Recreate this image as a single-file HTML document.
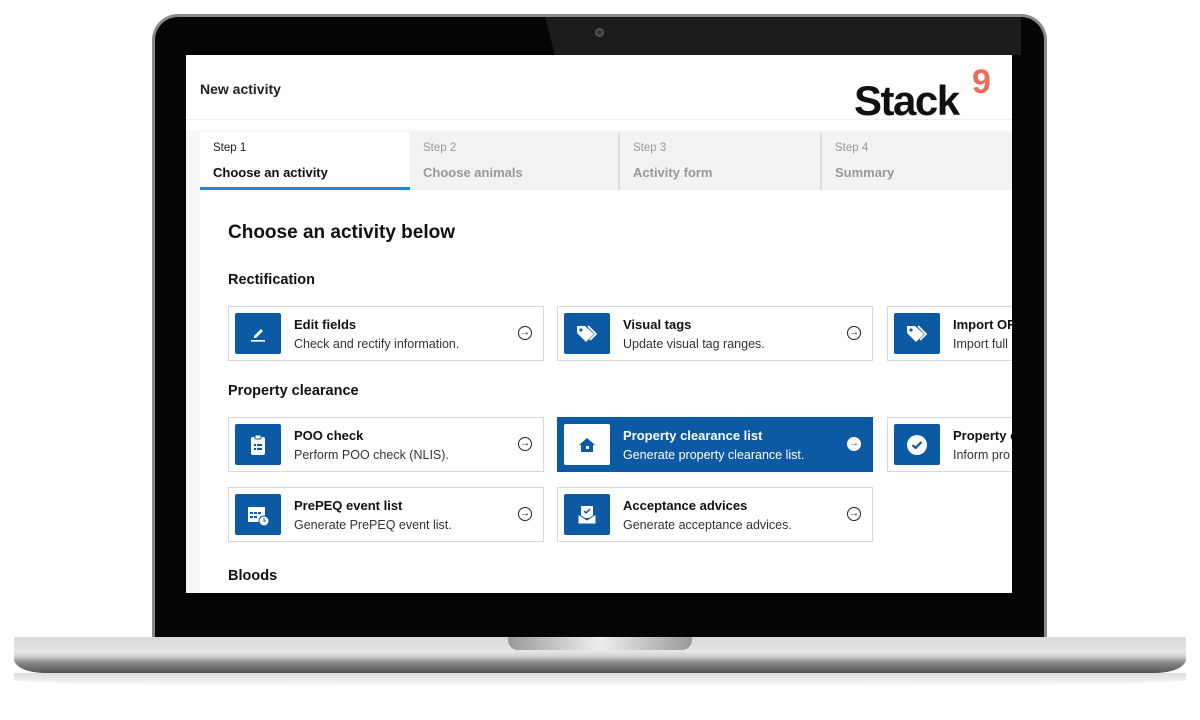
<!DOCTYPE html>
<html><head><meta charset="utf-8"><style>
*{margin:0;padding:0;box-sizing:border-box}
body{width:1200px;height:720px;background:#fff;position:relative;overflow:hidden;font-family:"Liberation Sans",Arial,sans-serif;color:#111}
.abs{position:absolute}
#bezel{left:152px;top:14px;width:895px;height:630px;background:#050505;border-radius:26px 26px 0 0;border:3px solid #8a8a8a;border-bottom:none}
#glare{left:545px;top:17px;width:476px;height:38px;background:#1c1c1e;clip-path:polygon(0 0,100% 0,100% 100%,10px 100%)}
#screen{left:186px;top:55px;width:826px;height:538px;background:#fff;overflow:hidden}
#base{left:14px;top:637px;width:1172px;height:36px;border-radius:0 0 30px 30px/0 0 14px 14px;background:linear-gradient(#d8d8d8 0,#e6e6e6 40%,#cfcfcf 55%,#8a8a8a 70%,#555 100%)}
#notch{left:508px;top:637px;width:184px;height:13px;border-radius:0 0 10px 10px;background:linear-gradient(90deg,#999,#eee 50%,#999)}
#shadow{left:14px;top:673px;width:1172px;height:14px;background:linear-gradient(#ddd,#fff);border-radius:0 0 50% 50%}
.card{position:absolute;width:316px;height:55px;border:1px solid #d8d8d8;background:#fff}
.card .ic{position:absolute;left:6px;top:6px;width:46px;height:41px;background:#0b5aa3;border-radius:2px;display:flex;align-items:center;justify-content:center}
.card .t{position:absolute;left:65px;top:10px;font-size:13px;font-weight:bold}
.card .d{position:absolute;left:65px;top:30px;font-size:12.5px;color:#333}
.card .ar{position:absolute;right:11px;top:19px;width:14px;height:14px;border:1.3px solid #222;border-radius:50%;font-size:10px;line-height:11px;text-align:center;font-weight:bold}
.card.sel{background:#0b5aa3;border-color:#0b5aa3}
.card.sel .t,.card.sel .d{color:#fff}
.card.sel .ic{background:#fff}
.card.sel .ar{background:#fff;color:#0b5aa3;border-color:#fff}
.step{position:absolute;top:77px;height:58px;background:#f2f2f2;border-right:2px solid #ddd}
.step .s{position:absolute;left:13px;top:10px;font-size:11.5px;color:#999}
.step .n{position:absolute;left:13px;top:33px;font-size:13px;color:#999;font-weight:bold}
h3{position:absolute;font-size:14.5px;font-weight:bold;left:42px}
</style></head><body>
<div class="abs" id="bezel"></div>
<div class="abs" id="glare"></div>
<div class="abs" style="left:595px;top:28px;width:9px;height:9px;border-radius:50%;background:#333;border:2px solid #555"></div>
<div class="abs" id="screen">
  <div class="abs" style="left:14px;top:26px;font-size:14px;font-weight:bold;color:#222">New activity</div>
  <div class="abs" style="left:0;top:64px;width:826px;height:1px;background:#eee"></div>
  <div class="abs" style="left:668px;top:22px;font-size:42px;font-weight:bold;letter-spacing:-1.5px;color:#111">Stack</div>
  <div class="abs" style="left:786px;top:10px;font-size:34px;font-weight:bold;color:#f06a5a;line-height:34px">9</div>
  <div class="abs" style="left:0;top:75px;width:826px;height:463px;background:#f7f7f7"></div>
  <div class="abs" style="left:14px;top:135px;width:812px;height:410px;background:#fff"></div>
  <div class="step" style="left:14px;width:210px;background:#fff;border-right:none"><div class="s" style="color:#222">Step 1</div><div class="n" style="color:#111">Choose an activity</div><div class="abs" style="left:0;bottom:0;width:210px;height:3px;background:#1e88e5"></div></div>
  <div class="step" style="left:224px;width:210px"><div class="s">Step 2</div><div class="n">Choose animals</div></div>
  <div class="step" style="left:434px;width:202px"><div class="s">Step 3</div><div class="n">Activity form</div></div>
  <div class="step" style="left:636px;width:200px"><div class="s">Step 4</div><div class="n">Summary</div></div>
  <div class="abs" style="left:42px;top:167px;font-size:19px;font-weight:bold">Choose an activity below</div>
  <h3 style="top:217px">Rectification</h3>
  <h3 style="top:328px">Property clearance</h3>
  <h3 style="top:513px">Bloods</h3>

  <div class="card" style="left:42px;top:251px"><div class="ic"><svg width="20" height="20" viewBox="0 0 20 20"><path d="M6 12l7-7 2 2-7 7H6z" fill="#fff"/><rect x="3" y="16" width="14" height="1.6" fill="#fff"/></svg></div><div class="t">Edit fields</div><div class="d">Check and rectify information.</div><div class="ar">→</div></div>
  <div class="card" style="left:371px;top:251px"><div class="ic"><svg width="24" height="22" viewBox="0 0 24 22"><path d="M2 3v7l9 9 8-8-9-8z" fill="#fff"/><circle cx="6" cy="7" r="1.6" fill="#0b5aa3"/><path d="M13 3l8 8-6 6" stroke="#fff" stroke-width="1.8" fill="none"/></svg></div><div class="t">Visual tags</div><div class="d">Update visual tag ranges.</div><div class="ar">→</div></div>
  <div class="card" style="left:701px;top:251px"><div class="ic"><svg width="24" height="22" viewBox="0 0 24 22"><path d="M2 3v7l9 9 8-8-9-8z" fill="#fff"/><circle cx="6" cy="7" r="1.6" fill="#0b5aa3"/><path d="M13 3l8 8-6 6" stroke="#fff" stroke-width="1.8" fill="none"/></svg></div><div class="t">Import OR</div><div class="d">Import full</div></div>

  <div class="card" style="left:42px;top:362px"><div class="ic"><svg width="18" height="22" viewBox="0 0 18 22"><rect x="2" y="3" width="14" height="18" rx="2" fill="#fff"/><rect x="6" y="1" width="6" height="4" rx="1" fill="#fff" stroke="#0b5aa3"/><g fill="#0b5aa3"><rect x="5" y="10" width="2" height="2"/><rect x="8" y="10" width="5" height="2"/><rect x="5" y="14" width="2" height="2"/><rect x="8" y="14" width="5" height="2"/></g></svg></div><div class="t">POO check</div><div class="d">Perform POO check (NLIS).</div><div class="ar">→</div></div>
  <div class="card sel" style="left:371px;top:362px"><div class="ic"><svg width="20" height="18" viewBox="0 0 20 18"><path d="M10 2l8 7h-2v7H4V9H2z" fill="#0b5aa3"/><rect x="9" y="10" width="3" height="3" fill="#fff"/></svg></div><div class="t">Property clearance list</div><div class="d">Generate property clearance list.</div><div class="ar">→</div></div>
  <div class="card" style="left:701px;top:362px"><div class="ic"><svg width="22" height="22" viewBox="0 0 22 22"><circle cx="11" cy="11" r="10" fill="#fff"/><path d="M6.5 11l3 3 6-6" stroke="#0b5aa3" stroke-width="2.2" fill="none"/></svg></div><div class="t">Property c</div><div class="d">Inform pro</div></div>

  <div class="card" style="left:42px;top:432px"><div class="ic"><svg width="24" height="24" viewBox="0 0 24 24"><rect x="2" y="4" width="17" height="15" fill="#fff"/><g fill="#0b5aa3"><rect x="4" y="9" width="3" height="2"/><rect x="8" y="9" width="3" height="2"/><rect x="12" y="9" width="3" height="2"/><rect x="4" y="13" width="3" height="2"/><rect x="8" y="13" width="3" height="2"/></g><circle cx="18" cy="18" r="5" fill="#fff" stroke="#0b5aa3"/><path d="M18 15v3h2" stroke="#0b5aa3" fill="none"/></svg></div><div class="t">PrePEQ event list</div><div class="d">Generate PrePEQ event list.</div><div class="ar">→</div></div>
  <div class="card" style="left:371px;top:432px"><div class="ic"><svg width="22" height="22" viewBox="0 0 22 22"><rect x="5" y="2" width="12" height="12" fill="#fff"/><path d="M8 7l2 2 4-4" stroke="#0b5aa3" stroke-width="1.5" fill="none"/><path d="M2 10l9 6 9-6v10H2z" fill="#fff" stroke="#0b5aa3" stroke-width="1"/></svg></div><div class="t">Acceptance advices</div><div class="d">Generate acceptance advices.</div><div class="ar">→</div></div>
</div>
<div class="abs" id="shadow"></div>
<div class="abs" id="base"></div>
<div class="abs" id="notch"></div>
</body></html>
